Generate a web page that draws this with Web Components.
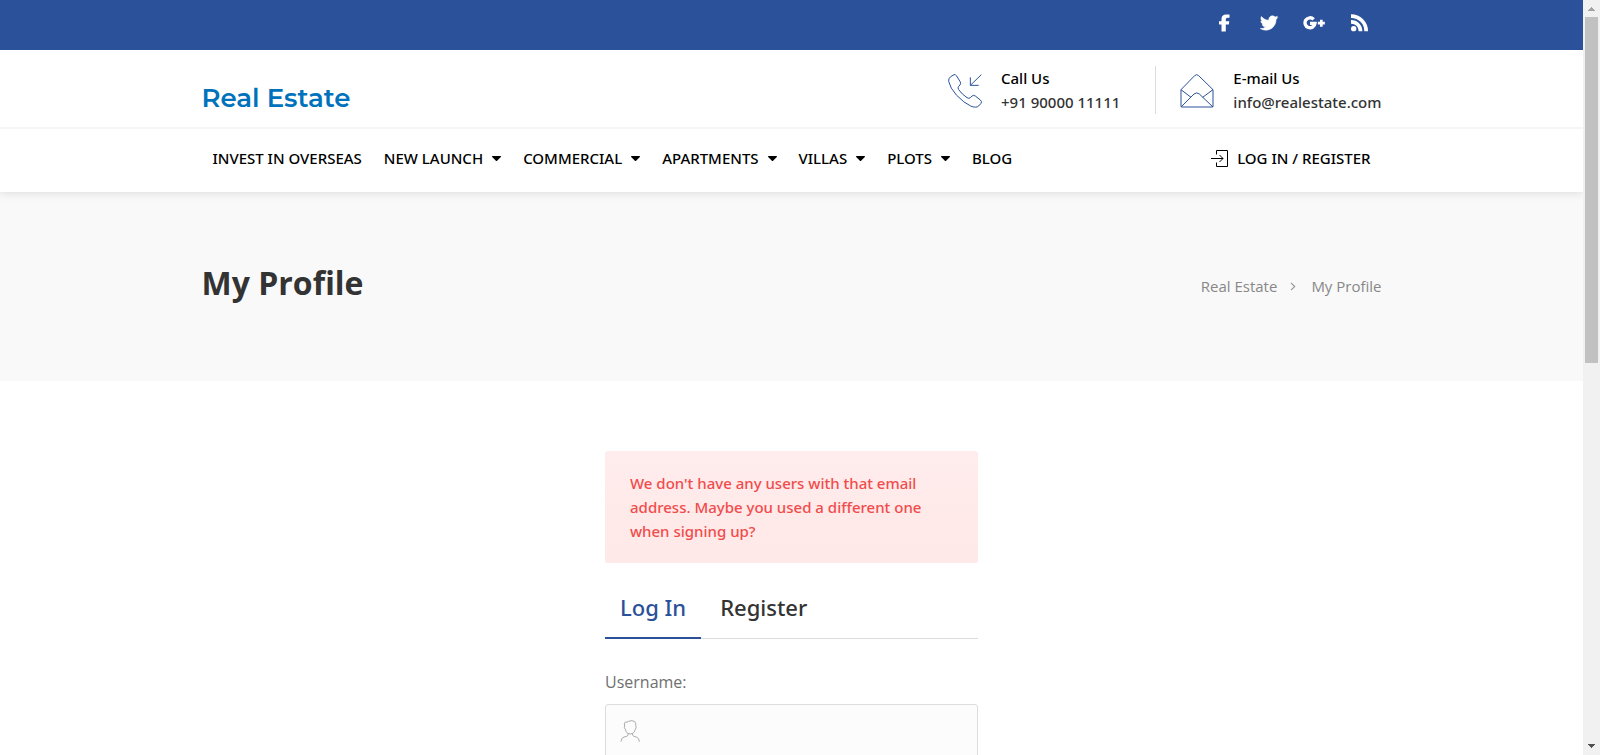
<!DOCTYPE html>
<html lang="en">
<head>
<meta charset="utf-8">
<title>My Profile - Real Estate</title>
<style>
html, body { margin: 0; height: 100%; }
body { font-family: "Open Sans", "Noto Sans", sans-serif; font-size: 15px; line-height: 24px; color: #707070; background: #fff; overflow: hidden; --accent: #2a5199; --medium: "Noto Sans", "Open Sans", sans-serif; }
</style>
</head>
<body>
<re-page>
  <re-topbar></re-topbar>
  <re-header></re-header>
  <re-titlebar heading="My Profile"></re-titlebar>
  <re-account>
    <re-notice>We don't have any users with that email address. Maybe you used a different one when signing up?</re-notice>
    <re-login-form></re-login-form>
  </re-account>
</re-page>
<script>
const define = (name, html) => customElements.define(name, class extends HTMLElement {
  constructor() {
    super();
    const t = document.createElement('template');
    t.innerHTML = '<style>*{box-sizing:border-box}a{color:inherit;text-decoration:none}svg{display:block;flex:none}:host{display:block}</style>' + html;
    this.attachShadow({ mode: 'open' }).append(t.content.cloneNode(true));
  }
});

define('re-scrollbar', `
<style>
:host { display: flex; flex-direction: column; width: 17px; flex: none; background: #f1f1f1; }
svg { width: 17px; height: 17px; }
.track { flex: 1; padding: 0 2px; }
.thumb { height: 48%; background: #c1c1c1; }
</style>
<svg viewBox="0 0 17 17" shape-rendering="crispEdges"><path fill="#a3a3a3" d="M5 11h7v-1h-1V9h-1V8H9V7H8v1H7v1H6v1H5z"/></svg>
<div class="track"><div class="thumb"></div></div>
<svg viewBox="0 0 17 17" shape-rendering="crispEdges"><path fill="#505050" d="M5 6h7v1h-1v1h-1v1H9v1H8V9H7V8H6V7H5z"/></svg>`);

define('re-page', `
<style>
:host { display: flex; height: 100vh; }
main { flex: 1; min-width: 0; overflow: hidden; }
</style>
<main><slot></slot></main><re-scrollbar></re-scrollbar>`);

define('re-container', `
<style>:host { max-width: 1180px; margin: 0 auto; }</style><slot></slot>`);

define('re-topbar', `
<style>
:host { background: var(--accent); height: 50px; position: relative; z-index: 2; }
nav { display: flex; justify-content: flex-end; }
a { display: flex; width: 45px; height: 45px; align-items: center; justify-content: center; }
</style>
<re-container><nav>
<a href="#" aria-label="Facebook"><svg width="18" height="18" viewBox="0 0 18 18" fill="#fff"><path d="M14.500 .5v3.300h-2q-1.700 0-1.700 1.500v1.900h3.500l-.5 3.300h-3v7H6.500v-7H4V7.200h2.500V5Q6.500.5 11.200.5z"/></svg></a>
<a href="#" aria-label="Twitter"><svg width="20" height="20" viewBox="0 0 1792 1792" fill="#fff" stroke="#fff" stroke-width="50"><path d="M1684 408q-67 98-162 167 1 14 1 42 0 130-38 259.5t-115.5 248.5-184.5 210.5-258 146-323 54.5q-271 0-496-145 35 4 78 4 225 0 401-138-105-2-188-64.5t-114-159.5q33 5 61 5 43 0 85-11-112-23-185.5-111.5t-73.5-205.5v-4q68 38 146 41-66-44-105-115t-39-154q0-88 44-163 121 149 294.5 238.5t371.5 99.5q-8-38-8-74 0-134 94.5-228.5t228.5-94.5q140 0 236 102 109-21 205-78-37 115-142 178 93-10 186-50z"/></svg></a>
<a href="#" aria-label="Google Plus"><svg width="22" height="14" viewBox="0 0 66 42" fill="none" stroke="#fff"><path stroke-width="10" d="M32 10A15 15 0 1 0 36 22H21"/><path stroke-width="8" d="M55 11v21M44.500 21.500h21"/></svg></a>
<a href="#" aria-label="RSS"><svg width="18" height="18" viewBox="0 0 54 54" fill="none" stroke="#fff"><circle cx="11" cy="44" r="8" fill="#fff" stroke="none"/><path stroke-width="11" d="M3 23.500A28 28 0 0 1 31.500 52M3 6.500A45 45 0 0 1 48.500 52"/></svg></a>
</nav></re-container>`);

define('re-contact', `
<style>
:host { display: flex; align-items: center; gap: 19px; color: #333; }
dl { margin: 0; font: 500 15px/24px var(--medium); }
dd { margin: 0; }
dt { color: #000; }
slot[name=icon] { display: block; padding-top: 2px; }
</style>
<slot name="icon"></slot>
<dl><dt><slot name="label"></slot></dt><dd><slot></slot></dd></dl>`);

define('re-nav-item', `
<style>
a { display: flex; align-items: center; gap: 9px; padding: 0 11px; color: #000; font: 500 15px/24px var(--medium); white-space: nowrap; }
svg { display: none; }
:host([menu]) svg { display: block; }
</style>
<a href="#"><slot></slot><svg width="9" height="5" viewBox="0 0 9 5"><path fill="#000" d="M.5 0h8q.8.200.3 1L5.100 4.700q-.6.500-1.200 0L.2 1Q-.3.200.5 0z"/></svg></a>`);

define('re-header', `
<style>
:host { background: #fff; box-shadow: 0 0 10px rgba(0,0,0,.15); position: relative; z-index: 1; }
.brand { display: flex; justify-content: space-between; height: 77px; }
.logo { font: 600 26px/32px Montserrat, Inter, sans-serif; color: #0072bc; padding-top: 32px; }
.contacts { display: flex; padding: 16px 0 13px; }
.contacts svg { fill: none; stroke: var(--accent); stroke-width: 3; }
re-contact + re-contact { border-left: 1px solid #ddd; margin-left: 35px; padding-left: 24px; }
.line { border-top: 2px solid #f6f6f6; }
.menu { display: flex; justify-content: space-between; padding: 17px 0 22px; }
nav { display: flex; }
.login { display: flex; align-items: center; gap: 9px; padding-right: 11px; color: #000; font: 500 15px/24px var(--medium); }
</style>
<re-container><div class="brand">
<a class="logo" href="#">Real Estate</a>
<div class="contacts">
<re-contact><svg slot="icon" width="34" height="34" viewBox="54 73 102 102"><path d="M72 75 62 81Q55 86 56 95 60 115 80 137 102 160 122 169 138 176 146 169L153 161Q157 156 151 151L136 139Q130 135 126 139L121 144Q117 148 111 144 96 134 86 120 82 114 86 110L90 106Q94 101 90 95L79 78Q76 73 72 75ZM154 75 121 107M121 83V107H146"/></svg><span slot="label">Call Us</span>+91 90000 11111</re-contact>
<re-contact><svg slot="icon" width="34" height="34" viewBox="748 73 102 102"><path d="M751 120 792 78Q798 72 804 78L847 120V170Q847 172 845 172H753Q751 172 751 170ZM751 120 781 143M847 120 816 143M751 172 790 133Q798 126 806 133L847 172"/></svg><span slot="label">E-mail Us</span><a href="#">info@realestate.com</a></re-contact>
</div></div></re-container>
<div class="line"><re-container><div class="menu">
<nav>
<re-nav-item>INVEST IN OVERSEAS</re-nav-item>
<re-nav-item menu>NEW LAUNCH</re-nav-item>
<re-nav-item menu>COMMERCIAL</re-nav-item>
<re-nav-item menu>APARTMENTS</re-nav-item>
<re-nav-item menu>VILLAS</re-nav-item>
<re-nav-item menu>PLOTS</re-nav-item>
<re-nav-item>BLOG</re-nav-item>
</nav>
<a class="login" href="#"><svg width="17" height="17" viewBox="0 0 17 17" fill="none" stroke="#000"><path d="M5.500 4.500v-4h11v16h-11v-4M0 8.500h12M8.500 5l3.500 3.500L8.500 12"/></svg>LOG IN / REGISTER</a>
</div></re-container></div>`);

customElements.define('re-titlebar', class extends HTMLElement {
  constructor() {
    super();
    this.attachShadow({ mode: 'open' }).innerHTML = `
<style>
:host { display: block; background: #f9f9f9; padding: 68px 0 75px; }
.row { display: flex; justify-content: space-between; align-items: center; }
h1 { margin: 0; font-size: 32px; line-height: 46px; font-weight: 700; color: #333; }
ol { display: flex; align-items: center; list-style: none; margin: 0; padding: 6px 0 0; color: #888; }
li { display: flex; align-items: center; }
a { color: inherit; text-decoration: none; }
svg { margin: 0 15px 0 13px; }
</style>
<re-container><div class="row"><h1></h1>
<ol><li><a href="#">Real Estate</a></li><li><svg width="6" height="9" viewBox="0 0 6 9" fill="none" stroke="#999" stroke-width="1.200"><path d="M1 .8 4.700 4.500 1 8.200"/></svg><span></span></li></ol>
</div></re-container>`;
  }
  connectedCallback() {
    for (const el of this.shadowRoot.querySelectorAll('h1, span')) el.textContent = this.getAttribute('heading');
  }
});

define('re-account', `
<style>:host { width: 373px; max-width: 100%; margin: 70px auto 0; }</style><slot></slot>`);

define('re-notice', `
<style>
:host { padding: 20px 25px; border-radius: 3px; background: linear-gradient(#ffecec, #ffe8e8); color: #f14c4c; font: 500 15px/24px var(--medium); margin-bottom: 20px; }
</style><slot></slot>`);

define('re-login-form', `
<style>
.tabs { display: flex; gap: 4px; box-shadow: inset 0 -1px #ddd; margin-bottom: 29px; }
button { font: 500 22px/30px var(--medium); color: #333; background: none; border: 0; border-bottom: 2px solid transparent; padding: 9px 15px 15px; }
button[aria-selected=true] { color: var(--accent); border-color: var(--accent); }
label { display: block; font-size: 16px; line-height: 28px; margin-bottom: 8px; }
.field { display: grid; align-items: center; }
.field > * { grid-area: 1 / 1; }
input { width: 100%; height: 54px; font: inherit; padding: 0 20px 0 45px; border: 1px solid #ddd; border-radius: 3px; background: #fcfcfc; outline: 0; }
svg { margin-left: 15px; fill: none; stroke: #aaa; stroke-width: 3; }
</style>
<div class="tabs" role="tablist"><button role="tab" aria-selected="true">Log In</button><button role="tab" aria-selected="false">Register</button></div>
<form><label for="user">Username:</label>
<div class="field"><input id="user" type="text"><svg width="20" height="22" viewBox="91 449 60 66"><path d="M107 455Q111 457 117 453 127 448 135 454 140 458 138 465 141 472 137 477 134 486 130 489 122 493 114 489 109 485 107 477 102 472 105 467 102 460 107 455ZM115 490V495Q112 499 103 500 94 503 94 514M129 490V495Q132 499 140 500 149 503 149 514"/></svg></div></form>`);
</script>
</body>
</html>
